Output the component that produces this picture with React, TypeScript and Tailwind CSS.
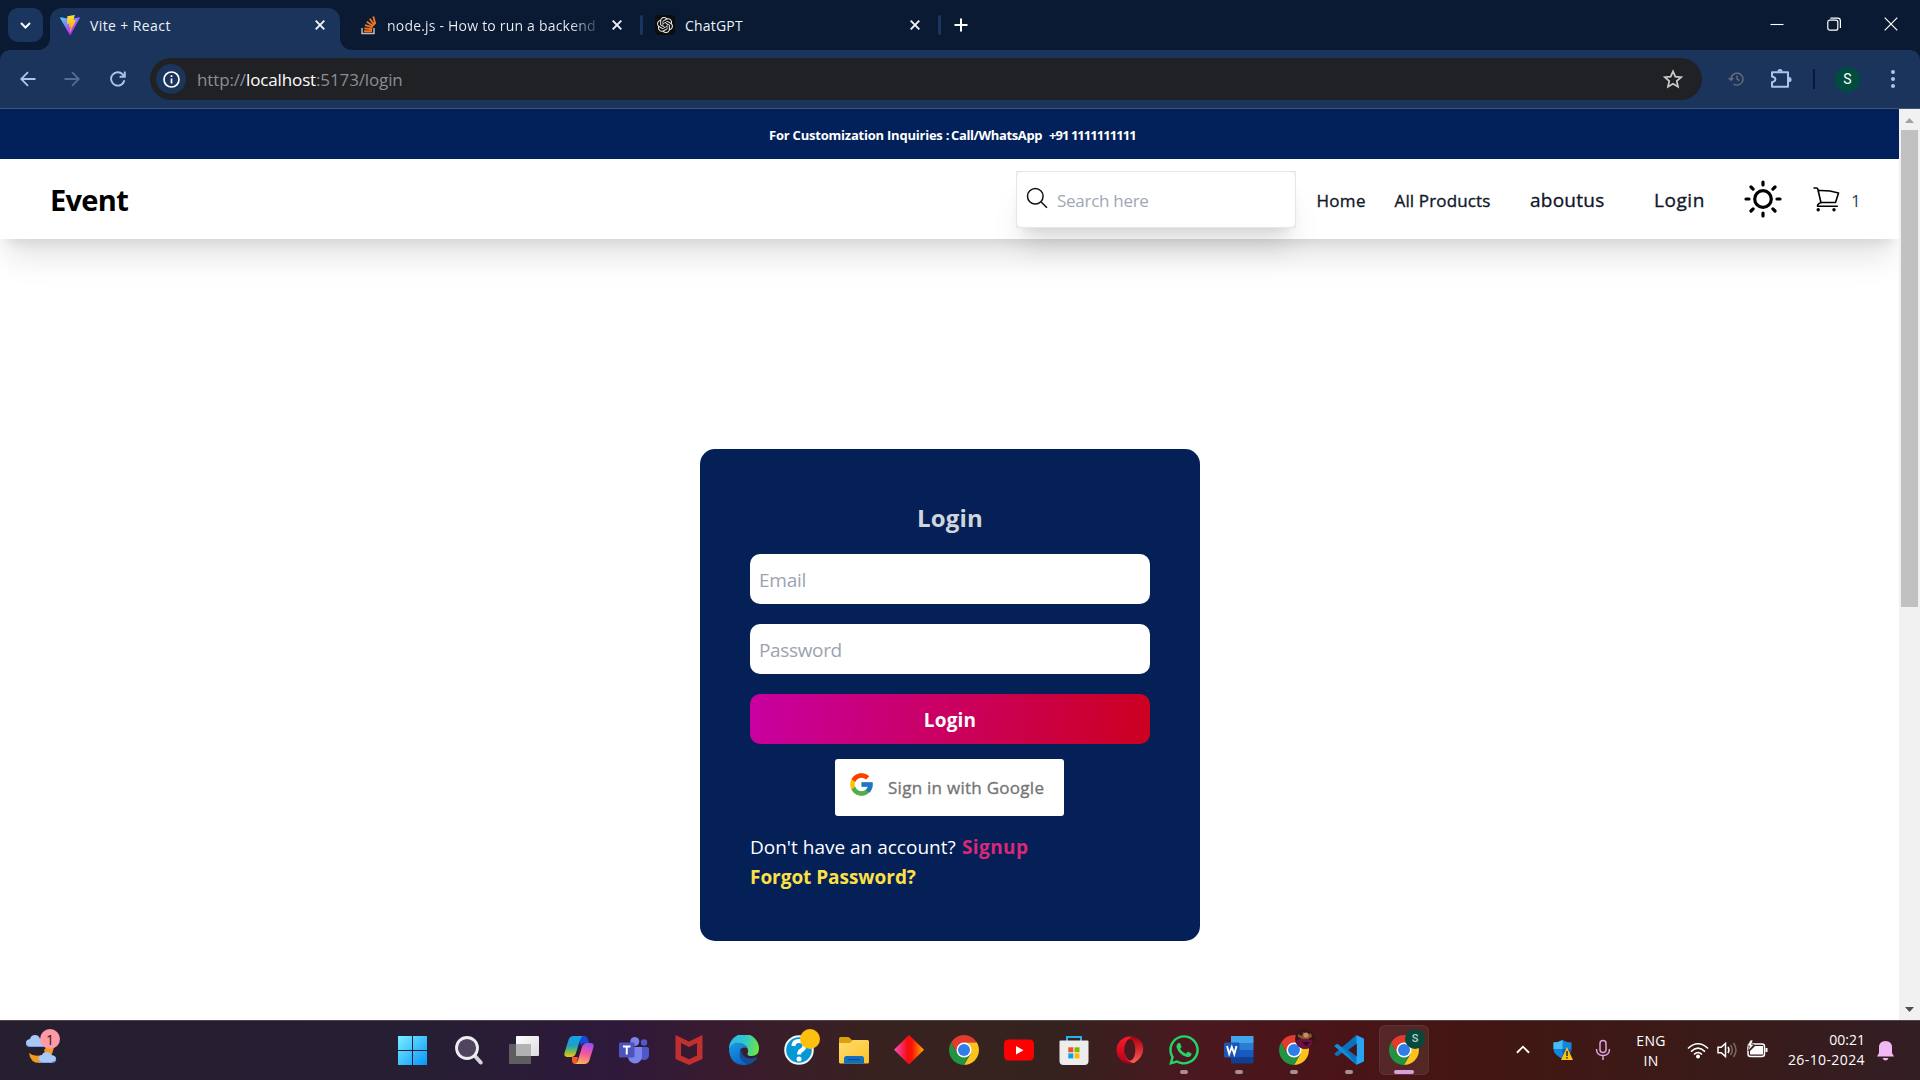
import React from 'react';
import { FaWhatsapp } from 'react-icons/fa';
import { FcGoogle } from 'react-icons/fc';
import { SiOpenai } from 'react-icons/si';

function X({ className = '' }: { className?: string }) {
  return (
    <svg className={`size-[10px] shrink-0 ${className}`} viewBox="0 0 10 10" stroke="#f1f4fa" strokeWidth="1.9">
      <path d="M.7.7l8.6 8.6M9.3.7L.7 9.3" />
    </svg>
  );
}

function Vite() {
  return (
    <svg className="size-5 shrink-0" viewBox="0 0 256 257">
      <defs>
        <linearGradient id="va" x1="0" x2=".58" y1=".1" y2=".8"><stop stopColor="#41D1FF" /><stop offset="1" stopColor="#BD34FE" /></linearGradient>
        <linearGradient id="vb" x1=".4" x2=".5" y1="0" y2=".9"><stop stopColor="#FFEA83" /><stop offset=".1" stopColor="#FFDD35" /><stop offset="1" stopColor="#FFA800" /></linearGradient>
      </defs>
      <path fill="url(#va)" d="M255.153 37.938L134.897 252.976c-2.483 4.44-8.862 4.466-11.382.048L.875 37.958c-2.746-4.814 1.371-10.646 6.827-9.67l120.385 21.517a6.537 6.537 0 0 0 2.322-.004l117.867-21.483c5.438-.991 9.574 4.796 6.877 9.62Z" />
      <path fill="url(#vb)" d="M185.432.063L96.44 17.501a3.268 3.268 0 0 0-2.634 3.014l-5.474 92.456a3.268 3.268 0 0 0 3.997 3.378l24.777-5.718c2.318-.535 4.413 1.507 3.936 3.838l-7.361 36.047c-.495 2.426 1.782 4.5 4.151 3.78l15.304-4.649c2.372-.72 4.652 1.36 4.15 3.788l-11.698 56.621c-.732 3.542 3.979 5.473 5.943 2.437l1.313-2.028l72.516-144.72c1.215-2.423-.88-5.186-3.54-4.672l-25.505 4.922c-2.396.462-4.435-1.77-3.759-4.114l16.646-57.705c.677-2.35-1.37-4.583-3.769-4.113Z" />
    </svg>
  );
}

function StackOverflow() {
  return (
    <svg className="h-5 w-4 shrink-0" viewBox="0 0 16 20" fill="none">
      <path d="M1 13v5.500h12V13" stroke="#bcbbbb" strokeWidth="1.500" />
      <path d="M3 16.300h8M3.200 13.400l8 .8M4 10.200l7.600 2.200M5.800 6.800l6.600 4.300M8.800 3.800l4.800 6.400M12.300 1.600l2 7.400" stroke="#f0741f" strokeWidth="1.900" />
    </svg>
  );
}

function TabStrip() {
  return (
    <div className="flex h-[50px] bg-[#0a1a33] text-[14px] text-[#eef2f9]">
      <div className="ml-2 mt-2 flex h-[34px] w-[35px] items-center justify-center rounded-[10px] bg-[#1a365e]">
        <svg className="size-[11px]" viewBox="0 0 11 11" fill="none" stroke="#fff" strokeWidth="2"><path d="M1 3l4.500 4.500L10 3" /></svg>
      </div>
      <svg className="-ml-[5px] mt-[38px] h-3 w-3" viewBox="0 0 12 12" fill="#1a345b"><path d="M12 0v12H0A12 12 0 0 0 12 0z" /></svg>
      <div className="mt-2 flex h-[42px] w-[290px] items-center rounded-t-[12px] bg-[#1a345b] pb-2 pl-[10px]">
        <Vite />
        <span className="ml-[10px] w-[225px] whitespace-nowrap tracking-[0.4px]">Vite + React</span>
        <X />
      </div>
      <svg className="mt-[38px] h-3 w-3" viewBox="0 0 12 12" fill="#1a345b"><path d="M0 0v12h12A12 12 0 0 1 0 0z" /></svg>
      <div className="flex h-[50px] w-[288px] items-center pl-[9px]">
        <StackOverflow />
        <span className="ml-[10px] w-[208px] overflow-hidden whitespace-nowrap bg-linear-to-r from-[#eef2f9] from-88% to-[#eef2f9]/25 bg-clip-text tracking-[0.2px] text-transparent">node.js - How to run a backend</span>
        <X className="ml-[17px]" />
      </div>
      <div className="mt-[15px] h-5 w-[3px] rounded bg-[#1a365e]" />
      <div className="ml-[12px] flex h-[50px] items-center">
        <div className="flex size-5 items-center justify-center rounded bg-[#0d0d0d]"><SiOpenai className="size-4 text-[#e6e6e6]" /></div>
        <span className="ml-[10px] w-[225px] whitespace-nowrap tracking-[0.2px]">ChatGPT</span>
        <X />
      </div>
      <div className="ml-[18px] mt-[15px] h-5 w-[3px] rounded bg-[#1a365e]" />
      <svg className="ml-[13px] mt-[18px] size-[14px]" viewBox="0 0 14 14" stroke="#fff" strokeWidth="2"><path d="M7 .5v13M.5 7h13" /></svg>
      <div className="ml-auto mr-[22px] mt-[17px] flex gap-[43px]">
        <svg className="size-[14px]" viewBox="0 0 14 14" stroke="#fff" strokeWidth="1.100"><path d="M.5 7.500h13" /></svg>
        <svg className="size-[14px]" viewBox="0 0 14 14" fill="none" stroke="#fff" strokeWidth="1.200"><rect x=".8" y="3.200" width="10" height="10" rx="2" /><path d="M3.400 1.100h7.200a2.800 2.800 0 0 1 2.800 2.800v7" /></svg>
        <svg className="size-[14px]" viewBox="0 0 14 14" stroke="#fff" strokeWidth="1.200"><path d="M.7.7l12.600 12.600M13.300.7L.7 13.300" /></svg>
      </div>
    </div>
  );
}

function Toolbar() {
  return (
    <div className="bg-[#0a1a33]">
      <div className="flex h-[59px] items-center rounded-t-[10px] border-b border-[#41566f] bg-[#1a345b]">
        <svg className="ml-5 size-4" viewBox="0 0 16 16" fill="none" stroke="#a9c4ee" strokeWidth="1.800"><path d="M15.500 8H1.500M8 1.200L1.200 8 8 14.800" /></svg>
        <svg className="ml-[28px] size-4" viewBox="0 0 16 16" fill="none" stroke="#526d95" strokeWidth="1.800"><path d="M.5 8h14M8 1.200L14.800 8 8 14.800" /></svg>
        <svg className="ml-[30px] size-4" viewBox="0 0 16 16" fill="none" stroke="#a9c4ee" strokeWidth="1.900"><path d="M14.400 9.200A6.700 6.700 0 1 1 12.700 3.300L14.300 5.200M14.800.6v5.200H9.600" /></svg>
        <div className="ml-6 flex h-[42px] w-[1552px] items-center rounded-full bg-[#202124] pl-[6px] pr-[19px]">
          <div className="flex size-[30px] items-center justify-center rounded-full bg-[#1a345b]">
            <svg className="size-[17px]" viewBox="0 0 17 17" fill="none" stroke="#fff" strokeWidth="1.700"><circle cx="8.500" cy="8.500" r="7.500" /><path d="M8.500 7.600v5M8.500 4.200v1.800" /></svg>
          </div>
          <span className="ml-[11px] mt-px whitespace-nowrap text-[17px] tracking-[-0.13px] text-[#8b8e93]">http://<span className="text-white">localhost</span>:5173/login</span>
          <svg className="ml-auto size-5" viewBox="0 0 24 24" fill="none" stroke="#c9cacc" strokeWidth="2.100"><path d="M12 2.800l2.800 6.300 6.900.7-5.200 4.600 1.500 6.800-6-3.600-6 3.600 1.500-6.800-5.200-4.600 6.900-.7z" /></svg>
        </div>
        <svg className="ml-[26px] size-4" viewBox="0 0 16 16" fill="none" stroke="#6a6f77" strokeWidth="1.400"><path d="M3 8A6 6 0 1 1 5.500 13M.6 7l2.400 2.200L5.200 7M9 4.600V8l2.400 1.600" /></svg>
        <svg className="ml-[26px] size-[22px]" viewBox="0 0 22 22" fill="none" stroke="#a9c4ee" strokeWidth="2"><path d="M2 4.200h16v14.600H2v-4.600q3.400-.7 3.400-2.900T2 8.400z" strokeLinejoin="round" /><path d="M7.400 3.600a2.600 2.600 0 0 1 5.200 0zM19 8.900a2.600 2.600 0 0 1 0 5.200z" fill="#a9c4ee" stroke="none" /></svg>
        <div className="ml-[21px] h-[20px] w-[2px] bg-[#0a1a33]" />
        <div className="ml-5 flex size-[25px] items-center justify-center rounded-full bg-[#004d40] font-[Roboto] text-[14px] text-white">S</div>
        <svg className="ml-[30.5px] h-[18px] w-1" viewBox="0 0 4 18" fill="#a9c4ee"><circle cx="2" cy="2" r="2" /><circle cx="2" cy="9" r="2" /><circle cx="2" cy="16" r="2" /></svg>
      </div>
    </div>
  );
}

function Navbar() {
  return (
    <nav className="relative flex h-[80px] items-center bg-white text-[#0f172a] shadow-[0_25px_31px_-6px_rgb(0_0_0/0.1),0_10px_12px_-7px_rgb(0_0_0/0.1)]">
      <span className="ml-[50px] pt-px text-[29px] font-bold tracking-[-0.7px] text-black">Event</span>
      <div className="ml-auto flex h-[57px] w-[280px] shrink-0 items-center border border-[#e5e7eb] bg-[#f3f4f6] shadow-[0_25px_31px_-6px_rgb(0_0_0/0.1),0_10px_12px_-7px_rgb(0_0_0/0.1)]">
        <div className="flex h-full w-full items-center rounded-md bg-white pl-[9px]">
          <svg className="-mt-[2px] size-[22px]" viewBox="0 0 22 22" fill="none" stroke="#111" strokeWidth="1.500"><circle cx="9.300" cy="9.200" r="7.800" /><path d="M14.900 14.700L21 20.800" /></svg>
          <span className="ml-[9px] mt-[3px] whitespace-nowrap text-[17px] tracking-[-0.28px] text-[#a0a7b5]">Search here</span>
        </div>
      </div>
      <span className="ml-[20.5px] mt-[3px] w-[78px] whitespace-nowrap text-[17px] tracking-[0.3px] [-webkit-text-stroke:0.35px]">Home</span>
      <span className="mt-[3px] w-[135.5px] whitespace-nowrap text-[17px] tracking-[0.15px] [-webkit-text-stroke:0.35px]">All Products</span>
      <span className="mt-0.5 w-[124px] whitespace-nowrap text-[19px] tracking-[0.25px] [-webkit-text-stroke:0.35px]">aboutus</span>
      <span className="mt-0.5 w-[90px] whitespace-nowrap text-[19px] tracking-[0.55px] [-webkit-text-stroke:0.35px]">Login</span>
      <svg className="-mt-px size-[38px]" viewBox="0 0 38 38" fill="none" stroke="#000" strokeWidth="3.200" strokeLinecap="round"><circle cx="19" cy="19" r="8.300" /><path d="M19 2v3M19 33v3M2 19h3M33 19h3M7 7l2.100 2.100M28.900 28.900L31 31M7 31l2.100-2.100M28.900 9.100L31 7" /></svg>
      <svg className="ml-[31px] size-[27px]" viewBox="0 0 27 27" fill="none" stroke="#000" strokeWidth="1.600" strokeLinejoin="round" strokeLinecap="round"><path d="M1 2h2.500q1 0 1.300 1L8 16.800M5.500 4.600q11-.3 20 2.300L22.500 16.500H7.800Q4 18.500 4.600 20.200H24.300" /><circle cx="5.200" cy="23.800" r="1.700" fill="#000" stroke="none" /><circle cx="21" cy="23.800" r="1.700" fill="#000" stroke="none" /></svg>
      <span className="ml-[11px] mr-[38px] mt-[3px] w-[10px] text-[17px] text-[#334155]">1</span>
    </nav>
  );
}

function LoginCard() {
  return (
    <div className="ml-[700px] mt-[210px] flex h-[492px] w-[500px] flex-col rounded-[15px] bg-[#042057] px-[50px] pt-[50px]">
      <h1 className="flex h-[38px] items-center justify-center text-[24px] font-bold tracking-[0.2px] text-[#d1d5db]">Login</h1>
      <div className="mt-[17px] flex h-[50px] items-center rounded-[10px] bg-white pl-[9px] pt-0.5 text-[19px] tracking-[-0.25px] text-[#9ca3af]">Email</div>
      <div className="mt-5 flex h-[50px] items-center rounded-[10px] bg-white pl-[9px] pt-0.5 text-[19px] tracking-[-0.35px] text-[#9ca3af]">Password</div>
      <button className="mt-5 flex h-[50px] items-center justify-center rounded-[10px] bg-[linear-gradient(98deg,#c800a1,#cc001f)] pt-0.5 text-[19px] font-bold tracking-[0.15px] text-white">Login</button>
      <div className="mr-px mt-[15px] flex h-[57px] w-[229px] items-center self-center rounded-[3px] bg-white pl-[13px]">
        <FcGoogle className="-mt-1.5 size-[27px] shrink-0" />
        <span className="ml-[13px] whitespace-nowrap text-[17px] tracking-[0.27px] text-[#757575] [-webkit-text-stroke:0.35px]">Sign in with Google</span>
      </div>
      <div className="mt-[16px] flex h-[30px] items-center text-[19px] text-white"><span className="w-[212px] whitespace-nowrap">Don't have an account?</span><span className="font-bold tracking-[0.4px] text-[#db2777]">Signup</span></div>
      <div className="flex h-[30px] items-center text-[19px] font-bold tracking-[-0.04px] text-[#fde047]">Forgot Password?</div>
    </div>
  );
}

function Chrome() {
  return (
    <svg className="size-[30px]" viewBox="0 0 48 48">
      <path d="M24 12h20.780A24 24 0 0 0 3.220 12L13.610 30z" fill="#e33b2e" />
      <path d="M34.390 30L24 48A24 24 0 0 0 44.780 12H24z" fill="#fcc31e" />
      <path d="M13.610 30L3.220 12A24 24 0 0 0 24 48L34.390 30z" fill="#229342" />
      <circle cx="24" cy="24" r="12" fill="#fff" /><circle cx="24" cy="24" r="9.600" fill="#2f7de9" />
    </svg>
  );
}

const icons: React.ReactNode[] = [
  <svg className="-ml-[4px] size-[30px]" viewBox="0 0 30 30"><defs><linearGradient id="win" x1="0" y1="0" x2="30" y2="30" gradientUnits="userSpaceOnUse"><stop stopColor="#7cf3ff" /><stop offset="1" stopColor="#0794fb" /></linearGradient></defs><path fill="url(#win)" d="M1 1h14v14H1zM16 1h14v14H16zM1 16h14v14H1zM16 16h14v14H16z" /></svg>,
  <svg className="size-[30px]" viewBox="0 0 30 30"><path d="M20.500 20.500l6.200 7" stroke="#d3d5d9" strokeWidth="4" strokeLinecap="round" /><circle cx="13" cy="13" r="10.500" fill="#50455f" stroke="#eceef0" strokeWidth="2.800" /></svg>,
  <svg className="size-[30px]" viewBox="0 0 30 30"><defs><linearGradient id="tv" x1="0" y1="0" x2="1" y2="1"><stop stopColor="#fff" /><stop offset="1" stopColor="#dcdcdc" /></linearGradient></defs><rect x="7" y="1" width="23" height="20" rx="1" fill="url(#tv)" /><rect y="9" width="22" height="20" rx="1" fill="#5e5e60" /><path d="M7 9h15v12H7z" fill="#b2b2b2" /></svg>,
  <svg className="size-[30px]" viewBox="0 0 30 30"><defs><linearGradient id="ca" x1="0" y1="0" x2="0" y2="1"><stop stopColor="#16a3e8" /><stop offset=".45" stopColor="#1c9fc9" /><stop offset=".75" stopColor="#7dbd4b" /><stop offset="1" stopColor="#fcc30c" /></linearGradient><linearGradient id="cb" x1=".6" y1="0" x2=".4" y2="1"><stop stopColor="#9b4ff0" /><stop offset=".5" stopColor="#f4569d" /><stop offset="1" stopColor="#ffb15a" /></linearGradient></defs><path d="M14 1h7q2 0 2.800 2.500L25 8h-5q-2 0-3 3z" fill="#164bd8" /><path d="M8 22h6l-1 4q-1 3 2 3H11q-2.500 0-3-3z" fill="#f25a2c" /><path d="M9.500 1H19q-2 .5-3 4L12 18q-1.200 4-5 4H3.500Q-.5 22 .6 17.500L4.500 5Q5.700 1 9.500 1z" fill="url(#ca)" /><path d="M20.500 29H11q2-.5 3-4L18 12q1.200-4 5-4h3.500q4 0 2.900 4.500L25.500 25q-1.200 4-5 4z" fill="url(#cb)" /></svg>,
  <svg className="size-[30px]" viewBox="0 0 30 30"><circle cx="25" cy="7.500" r="3.200" fill="#5059c9" /><path d="M21 12h7q2 0 2 2v6a5 5 0 0 1-9 3z" fill="#5059c9" /><circle cx="15.800" cy="6.500" r="4.500" fill="#7b83eb" /><path d="M9 12h14v9a7 7 0 0 1-14 1z" fill="#7b83eb" /><rect y="7.500" width="15.500" height="15" rx="1.200" fill="#4b53bc" /><path d="M4 11.500h7.500M7.750 11.500v8" stroke="#fff" strokeWidth="2" /></svg>,
  <svg className="size-[30px]" viewBox="0 0 30 30"><path d="M1.500 0L15 6.500 28.500 0v24L15 30 1.500 24zM7 8v12.500l8 3.700 8-3.700V8l-8 4z" fill="#c1302e" fillRule="evenodd" /></svg>,
  <svg className="size-[30px]" viewBox="0 0 30 30"><defs><linearGradient id="ea" x1="0" y1=".3" x2="1" y2=".5"><stop stopColor="#2bb8ea" /><stop offset=".5" stopColor="#30c6d0" /><stop offset="1" stopColor="#6be544" /></linearGradient><linearGradient id="eb" x1="0" y1="0" x2=".5" y2="1"><stop stopColor="#1a9de6" /><stop offset="1" stopColor="#0d66c5" /></linearGradient></defs><path d="M0 14A15 15 0 0 1 30 13.500Q30 21 22.500 21q-4.500 0-4-2.500 2-4-2-8Q6 4 0 14z" fill="url(#ea)" /><path d="M0 15Q1 8 9 8q7.500 0 9 5-8-2-7 6 1 9 9 10Q17 30 15 30 1 29.500 0 15z" fill="url(#eb)" /><path d="M13 13.500q-5 6 0 12 6 6 13 0 3-3 1.500-3.300-7 3-12-.8-4-3.500-2.500-7.900z" fill="#114a8b" /><path d="M11 17q-1 10 9 12.200 5-1.500 7.900-5.900.2-1-.9-.8-7 3-12-.8-2.500-2-4-4.700z" fill="#124f9b" /></svg>,
  <div className="relative"><svg className="size-[30px]" viewBox="0 0 30 30"><circle cx="15" cy="15" r="13.800" fill="#0598d5" stroke="#f2f7fa" strokeWidth="2" /><path d="M9.500 11q0-5 5.500-5t5.500 4.500q0 3-3 4.700Q15 16.600 15 19.500" stroke="#fff" strokeWidth="4" fill="none" /><circle cx="15" cy="24" r="2.500" fill="#fff" /></svg><div className="absolute -top-1.5 left-4 size-5 rounded-full bg-[#ffbf0f]" /></div>,
  <svg className="size-[30px]" viewBox="0 0 30 30"><defs><linearGradient id="fe" x1="0" y1="0" x2="1" y2="1"><stop stopColor="#ffde6c" /><stop offset="1" stopColor="#fcbf2c" /></linearGradient></defs><path d="M0 3.500q0-1.500 1.500-1.500h8L13 5H27v9H0z" fill="#dc9f10" /><path d="M1 8h10l3-3h14.500q1.500 0 1.500 1.500V27q0 1.500-1.500 1.500h-27Q0 28.500 0 27V8z" fill="url(#fe)" /><path d="M5 28.500v-5q0-2.500 2.500-2.500h15q2.500 0 2.500 2.500v5z" fill="#0f6fc0" /><path d="M9 24.600h12" stroke="#0a4f93" strokeWidth="1.200" /></svg>,
  <svg className="size-[30px]" viewBox="0 0 30 30"><defs><linearGradient id="di"><stop stopColor="#fa4fc9" /><stop offset=".45" stopColor="#f60d0d" /><stop offset=".6" stopColor="#f81408" /><stop offset="1" stopColor="#ffb000" /></linearGradient></defs><path d="M15 0l15 14.800L15 29.500 0 14.800z" fill="url(#di)" /></svg>,
  <Chrome />,
  <svg className="size-[30px]" viewBox="0 0 30 30"><rect y="4.500" width="30" height="21" rx="4.500" fill="#f00" /><path d="M12 11v8.500l7.500-4.200z" fill="#fff" /></svg>,
  <svg className="size-[30px]" viewBox="0 0 30 30"><path d="M8 6V2h14v4" fill="none" stroke="#22b3ee" strokeWidth="2" /><path d="M.5 6.500q0-1 1-1h27q1 0 1 1V26q0 4-4 4h-21q-4 0-4-4z" fill="#ededed" /><path d="M9.300 12.300h5v5h-5z" fill="#f25022" /><path d="M15.500 12.300h5v5h-5z" fill="#7fba00" /><path d="M9.300 18.400h5v5h-5z" fill="#00a4ef" /><path d="M15.500 18.400h5v5h-5z" fill="#ffb900" /></svg>,
  <svg className="ml-0.5 size-[30px]" viewBox="0 0 30 30"><defs><linearGradient id="op" x1="0" y1="0" x2="0" y2="1"><stop stopColor="#ff1b2d" /><stop offset="1" stopColor="#b30016" /></linearGradient><linearGradient id="oq" x1="0" y1="0" x2="0" y2="1"><stop stopColor="#b0000a" /><stop offset="1" stopColor="#ff5a5a" /></linearGradient></defs><path d="M10 5Q14 .5 19 2.500a14.500 14.500 0 0 1 0 25Q14 29 10 25z" fill="url(#oq)" /><path d="M15 .5a14.500 14.500 0 1 0 4.500 28.300Q9 28 9 15T19.500 1.200Q17.500.5 15 .5z" fill="url(#op)" /><path d="M19.500 1.200Q27 3 29 11q1.500 11-9.500 17.800-3 .2-5-2 6-2.800 6-11.800T14.500 3q2-2 5-1.800z" fill="url(#oq)" /><ellipse cx="15" cy="15" rx="5.700" ry="11.500" fill="#48191f" /></svg>,
  <FaWhatsapp className="size-[34px] shrink-0 text-[#25d366]" />,
  <svg className="size-[30px]" viewBox="0 0 30 30"><path d="M7 1h22.500v7H7z" fill="#41a5ee" /><path d="M7 8h22.500v7H7z" fill="#2b7cd3" /><path d="M7 15h22.500v7H7z" fill="#185abd" /><path d="M7 22h22.500v5.500q0 1-1 1H8q-1 0-1-1z" fill="#103f91" /><rect y="7.500" width="15.500" height="15" rx="1.200" fill="#1a56b8" /><path d="M3 11l2.200 8L7.800 12l2.500 7 2.200-8" stroke="#fff" strokeWidth="1.900" fill="none" /></svg>,
  <div className="relative"><Chrome /><svg className="absolute -top-1.5 left-4 size-5" viewBox="0 0 20 20"><circle cx="10" cy="10" r="10" fill="#33151a" /><path d="M1 12l6-3 6 1 5 2q-2 8-8 8T1 12z" fill="#6b1040" /><path d="M3 5l4 2 1-4 4 3 4-2 1 4-4 2H8L3 8z" fill="#8a5526" /><circle cx="11" cy="6" r="2.600" fill="#c98a66" /><path d="M7 13l4 4 4-4z" fill="#2a0d16" /></svg></div>,
  <svg className="size-[30px]" viewBox="0 0 100 100"><path d="M75 2L97 11q3 1.500 3 5v68q0 3.500-3 5L75 99 28 58 11 71 3 66q-3-2 0-5L75 0z" fill="#0c72c0" /><path d="M75 99L3 39q-3-3 0-5l8-5 17 13L75 98z" fill="#128bd8" /><path d="M75 1l22 10q3 1.500 3 5v68q0 3.500-3 5L75 99z" fill="#27a5f3" /><path d="M76 28v44L47 50z" fill="#48151a" /></svg>,
  <div className="relative"><Chrome /><div className="absolute -top-1.5 left-4 flex size-5 items-center justify-center rounded-full bg-[#07493f] font-[Roboto] text-[11px] font-medium text-[#b6cfca]">S</div></div>,
];

function Taskbar() {
  return (
    <footer className="flex h-[60px] border-t border-[#50464a] bg-[linear-gradient(90deg,#251f30_0%,#261e33_22%,#2e193a_32%,#3a1b2e_38%,#38221f_46%,#35221f_55%,#4a1820_62%,#4a1417_70%,#421612_77%,#3a1a17_88%,#331e24_100%)] text-white">
      <div className="flex w-[386.5px] shrink-0 pl-[26px] pt-[7px]">
        <svg className="h-10 w-9" viewBox="0 0 36 40"><path d="M18 22q2 3-2 5-8 2-13-2Q4 35 14 35 26 34 28 18l-4-3z" fill="#f09a1e" /><g fill="#a8c8f8"><path d="M3 18q-3 0-3-3.200T4 11q1-4 5-4t5 4h4v7z" /><path d="M16 34q-3.500 0-3.500-3.200t3.500-3.800q1-3 4.500-3t5 3q4.500.5 4.500 3.600T26 34z" /></g><path d="M0 16q1 2.500 3 2.500h15M12.800 32q1 2.500 3.500 2.500h10q3 0 3.700-2.500" stroke="#7ba4e8" fill="none" /></svg>
        <div className="-ml-[22px] mt-px flex size-5 items-center justify-center rounded-full bg-[#ff9aa5] text-[14px] text-[#2b1520]">1</div>
      </div>
      {icons.map((icon, i) => (
        <div key={i} className="flex w-[55px] shrink-0 justify-center pt-1">
          <div className={i === 18 ? 'flex size-[50px] flex-col items-center rounded-md border border-white/5 bg-white/8' : 'flex size-[50px] flex-col items-center border border-transparent'}>
            <div className="mt-[9px] flex size-[30px] items-center justify-center">{icon}</div>
            {i === 18 ? <div className="mt-[5px] h-1 w-5 rounded-full bg-[#d9a0e0]" /> : i >= 14 ? <div className="mt-[5px] h-1 w-2 rounded-full bg-[#a88f96]" /> : null}
          </div>
        </div>
      ))}
      <div className="flex grow text-[14px]">
        <svg className="ml-[84px] mt-[24px] h-[9px] w-[14px]" viewBox="0 0 15 9" fill="none" stroke="#fff" strokeWidth="2"><path d="M1 8l6.500-6.500L14 8" /></svg>
        <svg className="ml-[23.5px] mt-[18px] h-[22px] w-5" viewBox="0 0 20 22"><path d="M9.500 1Q14 3.500 18.500 3.500V10q0 6-9 9.500-9-3.500-9-9.500V3.500Q5 3.500 9.500 1z" fill="#1285de" /><path d="M9.500 1v9H.5V3.500Q5 3.500 9.500 1z" fill="#49bdf3" /><path d="M9.500 10h9q0 6-9 9.500z" fill="#0f5fb8" /><path d="M14 8l6 13H8z" fill="#fbc412" /><path d="M14 12v5M14 18v1.500" stroke="#222" strokeWidth="1.400" /></svg>
        <svg className="ml-[21.5px] mt-[18px] h-[22px] w-4" viewBox="0 0 16 22" fill="none" stroke="#dda1dd" strokeWidth="1.500"><rect x="5" y="1.500" width="6" height="12" rx="3" /><path d="M1.500 10q0 6.500 6.500 6.500t6.500-6.500M8 16.500V21" /></svg>
        <div className="ml-[25px] w-[31px] pt-[10px] text-center leading-[20px] tracking-[0.3px]">ENG<br />IN</div>
        <svg className="ml-[20px] mt-[21px] h-[17px] w-[22px]" viewBox="0 0 22 17" fill="none" stroke="#fff" strokeWidth="1.600"><path d="M1 6.500q10-9.500 20 0M4 9.600q7-6.800 14 0M7 12.500q4-4 8 0" /><circle cx="11" cy="14.500" r="2" fill="#fff" stroke="none" /></svg>
        <svg className="ml-[8px] mt-[20px] h-[18px] w-[21px]" viewBox="0 0 21 18" fill="none" stroke="#fff" strokeWidth="1.500"><path d="M1 6.300h3.200L8.500 2.500v13L4.200 11.700H1z" /><path d="M11 6q2 3 0 6" /><path d="M13.500 4q3.500 5 0 10M16.500 2q5 7 0 14" stroke="#7d6560" /></svg>
        <svg className="ml-[9px] mt-[19px] h-[18px] w-[21px]" viewBox="0 0 21 18"><rect x="1" y="4" width="16.500" height="12.500" rx="2.500" fill="none" stroke="#fff" strokeWidth="1.500" /><path d="M3 14.500V11l5-5h8v8.500zM18.500 8h2v4h-2z" fill="#fff" /><path d="M3.500 0L0 6h2.500L1 11l6-6.500H4.500L6 0z" fill="#fff" stroke="#3a1a17" strokeWidth=".6" /></svg>
        <div className="ml-auto w-[90px] whitespace-nowrap pt-[9px] text-right leading-[20px]"><span>00:21</span><br /><span className="tracking-[0.4px]">26-10-2024</span></div>
        <svg className="ml-[12px] mr-[26px] mt-[20px] h-[20px] w-[17px] shrink-0" viewBox="0 0 17 20" fill="#f1b9f3"><path d="M8.500 0Q15 0 15 6.500V12l2 3.500H0L2 12V6.500Q2 0 8.500 0zM5.500 17h6q-1 2.500-3 2.500t-3-2.500z" /></svg>
      </div>
    </footer>
  );
}

export default function App() {
  return (
    <div className="flex h-[1080px] w-[1920px] flex-col overflow-hidden bg-white font-['Open_Sans',sans-serif]">
      <TabStrip />
      <Toolbar />
      <div className="flex h-[911px]">
        <main className="w-[1899px] overflow-hidden">
          <div className="flex h-[50px] items-center bg-[#022059] pl-[769px] pt-1 text-[13px] font-bold text-white">
            <span className="w-[182px] whitespace-nowrap tracking-[-0.22px]">For Customization Inquiries :</span>
            <span className="w-[98px] whitespace-nowrap tracking-[-0.37px]">Call/WhatsApp</span>
            <span className="whitespace-nowrap tracking-[-0.95px]">+91 1111111111</span>
          </div>
          <Navbar />
          <LoginCard />
        </main>
        <aside className="flex w-[21px] flex-col items-center bg-[#f1f1f1]">
          <svg className="mt-[9px] h-[5px] w-[9px]" viewBox="0 0 9 5" fill="#a3a3a3"><path d="M0 5l4.500-5L9 5z" /></svg>
          <div className="mt-[7px] h-[477px] w-[17px] bg-[#c1c1c1]" />
          <svg className="mb-[8px] mt-auto h-[5px] w-[9px]" viewBox="0 0 9 5" fill="#505050"><path d="M0 0l4.500 5L9 0z" /></svg>
        </aside>
      </div>
      <Taskbar />
    </div>
  );
}
